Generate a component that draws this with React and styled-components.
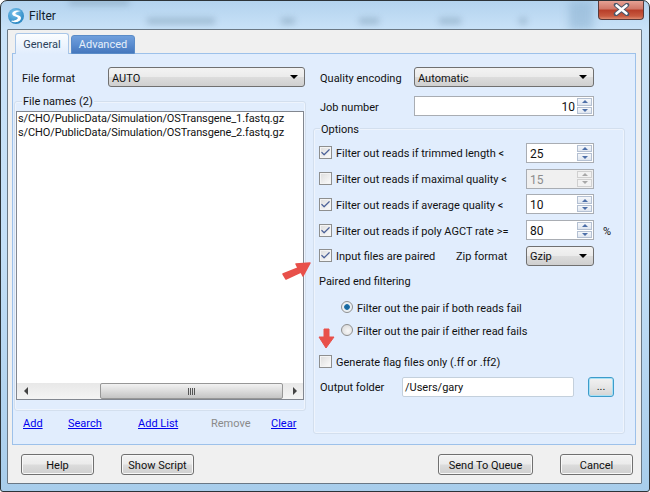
import React from 'react';
import styled, { createGlobalStyle } from 'styled-components';
import { Check } from 'lucide-react';

const GlobalStyle = createGlobalStyle`
  html, body {
    margin: 0;
    padding: 0;
    background: #fff;
  }
  * {
    box-sizing: border-box;
  }
`;

const leftLinks = [
  { label: 'Add' },
  { label: 'Search' },
  { label: 'Add List' },
  { label: 'Remove', disabled: true },
  { label: 'Clear' },
];

const filters = [
  { label: 'Filter out reads if trimmed length <', value: '25', checked: true },
  { label: 'Filter out reads if maximal quality <', value: '15', disabled: true },
  { label: 'Filter out reads if average quality <', value: '10', checked: true },
  { label: 'Filter out reads if poly AGCT rate >=', value: '80', checked: true, unit: '%' },
];

const CheckBox = ({ checked }) => (
  <Box>
    {checked && <Check size={11} strokeWidth={2.6} color="#4d6298" />}
  </Box>
);

const Spinner = ({ disabled }) => (
  <Spin $disabled={disabled}>
    <SpinButton $disabled={disabled}><SpinArrow /></SpinButton>
    <SpinButton $disabled={disabled}><SpinArrow $down /></SpinButton>
  </Spin>
);

const Select = ({ value, width }) => (
  <SelectBox $width={width}>
    <SelectValue>{value}</SelectValue>
    <Caret />
  </SelectBox>
);

const App = () => {
  return (
    <Window>
      <GlobalStyle />
      <Backdrop aria-hidden="true">
        <Smudge $left={68} $width={60} $top={-2} />
        <Smudge $left={146} $width={68} $top={17} />
        <Smudge $left={280} $width={14} $top={17} />
        <Smudge $left={358} $width={20} $top={17} />
        <Smudge $left={438} $width={22} $top={17} />
        <Smudge $left={518} $width={8} $top={17} />
        <Pillar />
      </Backdrop>
      <TitleBar>
        <AppLogo viewBox="0 0 16 16">
          <defs>
            <radialGradient id="logoFill" cx="0.4" cy="0.3" r="0.8">
              <stop offset="0" stopColor="#7cc4ee" />
              <stop offset="1" stopColor="#1f7fbd" />
            </radialGradient>
          </defs>
          <circle cx="8" cy="8" r="8" fill="url(#logoFill)" />
          <path d="M13 3C9 1.500 4 3 4.200 6c.2 2.600 5.400 2.200 5.600 4 .1 1.400-3 2.800-7 3 4 2.400 10 1 10.200-3 .1-3-5.400-2.800-5.600-4.200C7.200 4.400 10 3.400 13 3z" fill="#fff" />
        </AppLogo>
        <TitleText>Filter</TitleText>
        <CloseButton>
          <svg width="17" height="13" viewBox="0 0 17 13">
            <path d="M3 2l11 9M14 2L3 11" stroke="#49566a" strokeWidth="4.500" strokeLinecap="round" />
            <path d="M3.500 2.500l10 8M13.500 2.500l-10 8" stroke="#fff" strokeWidth="2.600" strokeLinecap="round" />
          </svg>
        </CloseButton>
      </TitleBar>
      <Client>
        <Tabs>
          <Tab $active>General</Tab>
          <Tab>Advanced</Tab>
        </Tabs>
        <Panel>
          <LeftColumn>
            <FormatRow>
              <FieldLabel $width={86}>File format</FieldLabel>
              <Select value="AUTO" width={197} />
            </FormatRow>
            <Group $height={310}>
              <Legend $left={7} $top={-7}>File names (2)</Legend>
              <FileList>
                <FileLines>
                  <div>s/CHO/PublicData/Simulation/OSTransgene_1.fastq.gz</div>
                  <div>s/CHO/PublicData/Simulation/OSTransgene_2.fastq.gz</div>
                </FileLines>
                <ScrollBar>
                  <ScrollEnd><Triangle /></ScrollEnd>
                  <Thumb>
                    <Grip /><Grip /><Grip /><Grip />
                  </Thumb>
                  <ScrollEnd $last><Triangle $right /></ScrollEnd>
                </ScrollBar>
              </FileList>
            </Group>
            <LinkRow>
              {leftLinks.map((link) => (
                <FileLink key={link.label} $disabled={link.disabled}>{link.label}</FileLink>
              ))}
            </LinkRow>
          </LeftColumn>
          <RightColumn>
            <FieldRow>
              <FieldLabel $width={94}>Quality encoding</FieldLabel>
              <Select value="Automatic" width={180} />
            </FieldRow>
            <FieldRow $top={9}>
              <FieldLabel $width={94}>Job number</FieldLabel>
              <NumberBox $width={180}>
                <NumberValue $right>10</NumberValue>
                <Spinner />
              </NumberBox>
            </FieldRow>
            <Group $height={306} $top={12} $pad>
              <Legend $left={6} $top={-6}>Options</Legend>
              {filters.map((row) => (
                <OptionRow key={row.label}>
                  <CheckBox checked={row.checked} />
                  <OptionText>{row.label}</OptionText>
                  <NumberBox $width={68} $disabled={row.disabled}>
                    <NumberValue $disabled={row.disabled}>{row.value}</NumberValue>
                    <Spinner disabled={row.disabled} />
                  </NumberBox>
                  {row.unit && <Unit>{row.unit}</Unit>}
                </OptionRow>
              ))}
              <OptionRow>
                <CheckBox checked />
                <PairedText>Input files are paired</PairedText>
                <ZipLabel>Zip format</ZipLabel>
                <Select value="Gzip" width={68} />
              </OptionRow>
              <SectionLabel>Paired end filtering</SectionLabel>
              <RadioList>
                <RadioRow>
                  <Radio $selected />
                  <RadioText>Filter out the pair if both reads fail</RadioText>
                </RadioRow>
                <RadioRow>
                  <Radio />
                  <RadioText>Filter out the pair if either read fails</RadioText>
                </RadioRow>
              </RadioList>
              <FlagRow>
                <CheckBox />
                <OptionText>Generate flag files only (.ff or .ff2)</OptionText>
              </FlagRow>
              <FolderRow>
                <FieldLabel $width={82}>Output folder</FieldLabel>
                <FolderInput>/Users/gary</FolderInput>
                <BrowseButton>...</BrowseButton>
              </FolderRow>
            </Group>
          </RightColumn>
        </Panel>
        <Footer>
          <FooterGroup>
            <PushButton $width={73}>Help</PushButton>
            <PushButton $width={73}>Show Script</PushButton>
          </FooterGroup>
          <FooterGroup>
            <PushButton $width={95}>Send To Queue</PushButton>
            <PushButton $width={73}>Cancel</PushButton>
          </FooterGroup>
        </Footer>
      </Client>
      <ArrowLayer viewBox="0 0 650 492">
        <path d="M283 274l15-6-2-4 14-1-7 13-2-4-15 7z" fill="#e8504a" stroke="#e8504a" strokeWidth="1.500" strokeLinejoin="round" />
        <path d="M324 329h5v8h5l-8 11-7-11h5z" fill="#e8504a" stroke="#e8504a" strokeWidth="1" strokeLinejoin="round" />
      </ArrowLayer>
    </Window>
  );
};

export default App;

const uiFont = `Roboto, "Open Sans", "Liberation Sans", sans-serif`;

const Window = styled.div`
  position: relative;
  width: 650px;
  height: 492px;
  overflow: hidden;
  display: flex;
  flex-direction: column;
  padding: 0 7px 7px 6px;
  background: linear-gradient(180deg, #b3d3ee 0%, #c9e2f8 6%, #c3dff7 50%, #a8cdeb 100%);
  border: 1px solid #2c3338;
  border-radius: 7px 7px 3px 3px;
  font-family: ${uiFont};
  font-size: 11px;
  color: #111;
`;

const Backdrop = styled.div`
  position: absolute;
  inset: 0 0 auto 0;
  height: 29px;
  overflow: hidden;
`;

const Smudge = styled.div`
  position: absolute;
  top: ${(props) => props.$top}px;
  left: ${(props) => props.$left}px;
  width: ${(props) => props.$width}px;
  height: 6px;
  background: #7f9db5;
  filter: blur(3px);
  opacity: 0.55;
`;

const Pillar = styled.div`
  position: absolute;
  top: 0;
  left: 568px;
  width: 24px;
  height: 29px;
  background: #8fb4d2;
  filter: blur(4px);
  opacity: 0.6;
`;

const TitleBar = styled.div`
  position: relative;
  flex: 0 0 28px;
  display: flex;
  align-items: center;
  padding: 2px 0 0 1px;
`;

const AppLogo = styled.svg`
  width: 16px;
  height: 16px;
  margin-right: 5px;
`;

const TitleText = styled.div`
  font-size: 12px;
  color: #10202c;
`;

const CloseButton = styled.div`
  position: absolute;
  top: -1px;
  right: -2px;
  width: 46px;
  height: 20px;
  display: flex;
  align-items: center;
  justify-content: center;
  border: 1px solid #5a3a3a;
  border-top: none;
  border-radius: 0 0 4px 4px;
  background: linear-gradient(180deg, #e8a79a 0%, #d1796a 45%, #b83f2a 55%, #c85a40 85%, #dd8b70 100%);
`;

const Client = styled.div`
  position: relative;
  flex: 1;
  display: flex;
  flex-direction: column;
  padding: 3px 5px 0 4px;
  background: #f0f0f0;
  border: 1px solid #6a7885;
  border-radius: 1px;
`;

const Tabs = styled.div`
  display: flex;
  align-items: flex-end;
  height: 21px;
  padding-left: 3px;
  gap: 2px;
  margin-bottom: -1px;
`;

const Tab = styled.div`
  position: relative;
  z-index: 1;
  display: flex;
  align-items: center;
  justify-content: center;
  width: ${(props) => (props.$active ? 54 : 64)}px;
  height: ${(props) => (props.$active ? 21 : 19)}px;
  border: 1px solid ${(props) => (props.$active ? '#a9c6e8' : '#5a8cc8')};
  border-bottom: ${(props) => (props.$active ? 'none' : undefined)};
  border-radius: 3px 3px 0 0;
  background: ${(props) =>
    props.$active
      ? 'linear-gradient(180deg, #fbfdff 0%, #e1edfd 100%)'
      : 'linear-gradient(180deg, #6f9fdc 0%, #5b8dd0 50%, #4577bd 100%)'};
  color: ${(props) => (props.$active ? '#2a3f5a' : '#e6effa')};
`;

const Panel = styled.div`
  flex: 0 0 392px;
  display: grid;
  grid-template-columns: 292px 312px;
  column-gap: 7px;
  padding: 13px 0 0 1px;
  background: #e1edfd;
  border: 1px solid #9dc1ea;
`;

const LeftColumn = styled.div`
  display: flex;
  flex-direction: column;
`;

const RightColumn = styled.div`
  display: flex;
  flex-direction: column;
`;

const FormatRow = styled.div`
  display: flex;
  align-items: center;
  height: 20px;
  padding-left: 8px;
`;

const FieldRow = styled.div`
  display: flex;
  align-items: center;
  height: 20px;
  padding-left: 7px;
  margin-top: ${(props) => props.$top || 0}px;
`;

const FieldLabel = styled.div`
  flex: 0 0 ${(props) => props.$width}px;
  padding-top: 2px;
  white-space: nowrap;
`;

const SelectBox = styled.div`
  flex: 0 0 ${(props) => props.$width}px;
  width: ${(props) => props.$width}px;
  height: 20px;
  display: flex;
  align-items: center;
  justify-content: space-between;
  padding: 0 6px 0 3px;
  border: 1px solid #707070;
  border-radius: 3px;
  background: linear-gradient(180deg, #f3f3f3 0%, #ebebeb 48%, #dcdcdc 52%, #cfcfcf 100%);
  color: #111;
`;

const SelectValue = styled.span`
  padding-top: 2px;
`;

const Caret = styled.div`
  width: 0;
  height: 0;
  border-left: 4px solid transparent;
  border-right: 4px solid transparent;
  border-top: 4px solid #000;
`;

const Group = styled.div`
  position: relative;
  height: ${(props) => props.$height}px;
  margin-top: ${(props) => props.$top || 14}px;
  padding: ${(props) => (props.$pad ? '11px 0 0 5px' : '9px 1px 11px 1px')};
  border: 1px solid #d3dfee;
  border-radius: 3px;
  box-shadow: inset 0 0 0 1px #eef4fd;
`;

const Legend = styled.div`
  position: absolute;
  top: ${(props) => props.$top}px;
  left: ${(props) => props.$left}px;
  padding: 0 1px;
  background: #e1edfd;
`;

const FileList = styled.div`
  height: 289px;
  display: flex;
  flex-direction: column;
  background: #fff;
  border: 1px solid #828790;
`;

const FileLines = styled.div`
  flex: 1;
  padding: 0 0 0 1px;
  line-height: 14px;
  letter-spacing: -0.1px;
  white-space: nowrap;
  overflow: hidden;
`;

const ScrollBar = styled.div`
  flex: 0 0 16px;
  display: flex;
  background: linear-gradient(180deg, #e8e8e8 0%, #f4f4f4 100%);
`;

const ScrollEnd = styled.div`
  flex: 0 0 17px;
  margin-left: ${(props) => (props.$last ? 'auto' : 0)};
  display: flex;
  align-items: center;
  justify-content: center;
`;

const Triangle = styled.div`
  width: 0;
  height: 0;
  border-top: 4px solid transparent;
  border-bottom: 4px solid transparent;
  border-left: ${(props) => (props.$right ? '4px solid #444' : 'none')};
  border-right: ${(props) => (props.$right ? 'none' : '4px solid #444')};
`;

const Thumb = styled.div`
  flex: 0 0 183px;
  margin-left: 66px;
  display: flex;
  align-items: center;
  justify-content: center;
  gap: 1px;
  border: 1px solid #979797;
  border-radius: 2px;
  background: linear-gradient(180deg, #f2f2f2 0%, #dcdcdc 50%, #c4c4c4 100%);
`;

const Grip = styled.div`
  width: 1px;
  height: 7px;
  background: #555;
`;

const LinkRow = styled.div`
  display: grid;
  grid-template-columns: 45px 70px 73px 60px auto;
  padding: 6px 0 0 9px;
`;

const FileLink = styled.span`
  justify-self: start;
  color: ${(props) => (props.$disabled ? '#8a8a8a' : '#0000ee')};
  text-decoration: ${(props) => (props.$disabled ? 'none' : 'underline')};
`;

const OptionRow = styled.div`
  display: flex;
  align-items: center;
  height: 25.75px;
`;

const Box = styled.div`
  flex: 0 0 13px;
  width: 13px;
  height: 13px;
  display: flex;
  align-items: center;
  justify-content: center;
  border: 1px solid #8e8f8f;
  background: linear-gradient(135deg, #dcdcdc 0%, #f6f6f6 80%);
  box-shadow: inset 0 0 0 1px #f4f4f4;
`;

const OptionText = styled.div`
  flex: 0 0 auto;
  width: 190px;
  margin-left: 4px;
  padding-top: 2px;
  white-space: nowrap;
`;

const PairedText = styled(OptionText)`
  width: 120px;
`;

const ZipLabel = styled.div`
  width: 70px;
  padding-top: 2px;
`;

const NumberBox = styled.div`
  flex: 0 0 ${(props) => props.$width}px;
  height: 20px;
  display: flex;
  align-items: stretch;
  justify-content: space-between;
  padding: 1px;
  border: 1px solid #a9adb3;
  background: ${(props) => (props.$disabled ? '#f0f0f0' : '#fff')};
`;

const NumberValue = styled.div`
  flex: 1;
  display: flex;
  align-items: center;
  justify-content: ${(props) => (props.$right ? 'flex-end' : 'flex-start')};
  padding: 2px 2px 0;
  font-size: 12px;
  color: ${(props) => (props.$disabled ? '#8c8c8c' : '#111')};
`;

const Spin = styled.div`
  flex: 0 0 15px;
  display: flex;
  flex-direction: column;
  gap: 1px;
`;

const SpinButton = styled.div`
  flex: 1;
  display: flex;
  align-items: center;
  justify-content: center;
  border: 1px solid ${(props) => (props.$disabled ? '#d0d0d0' : '#b4c0d2')};
  background: ${(props) => (props.$disabled ? '#f2f2f2' : 'linear-gradient(180deg, #f6f8fb 0%, #dfe6f0 100%)')};
  color: ${(props) => (props.$disabled ? '#a8a8a8' : '#4d6fa8')};
`;

const SpinArrow = styled.div`
  width: 0;
  height: 0;
  border-left: 3.500px solid transparent;
  border-right: 3.500px solid transparent;
  border-bottom: ${(props) => (props.$down ? 'none' : '3.500px solid currentColor')};
  border-top: ${(props) => (props.$down ? '3.500px solid currentColor' : 'none')};
`;

const Unit = styled.div`
  margin: 3px 0 0 9px;
`;

const SectionLabel = styled.div`
  height: 16px;
  line-height: 16px;
  margin-top: 5px;
`;

const RadioList = styled.div`
  display: flex;
  flex-direction: column;
  margin-top: 6px;
  padding-left: 22px;
`;

const RadioRow = styled.div`
  display: flex;
  align-items: center;
  height: 23px;
  gap: 4px;
`;

const RadioText = styled.span`
  padding-top: 2px;
`;

const Radio = styled.div`
  width: 12px;
  height: 12px;
  border-radius: 50%;
  border: 1px solid #8e8f8f;
  background: ${(props) =>
    props.$selected
      ? 'radial-gradient(circle, #16639a 0%, #1b6fa8 35%, #e8eef2 45%, #f4f4f4 100%)'
      : 'radial-gradient(circle at 60% 60%, #f8f8f8 0%, #d4d4d4 100%)'};
`;

const FlagRow = styled.div`
  display: flex;
  align-items: center;
  height: 20px;
  margin-top: 10px;
`;

const FolderRow = styled.div`
  display: flex;
  align-items: center;
  height: 20px;
  margin-top: 5px;
  padding-left: 1px;
`;

const FolderInput = styled.div`
  flex: 0 0 172px;
  height: 20px;
  display: flex;
  align-items: center;
  padding: 2px 2px 0;
  background: #fff;
  border: 1px solid #c4d0dc;
  border-radius: 2px;
`;

const BrowseButton = styled.div`
  flex: 0 0 26px;
  height: 20px;
  margin-left: 14px;
  display: flex;
  align-items: center;
  justify-content: center;
  border: 1px solid #3c9ccb;
  border-radius: 3px;
  background: linear-gradient(180deg, #f2f2f2 0%, #e6e6e6 50%, #d4d4d4 100%);
  box-shadow: inset 0 0 0 1px #a8e0f4;
`;

const Footer = styled.div`
  flex: 1;
  display: flex;
  align-items: flex-start;
  justify-content: space-between;
  padding: 9px 3px 0 9px;
`;

const FooterGroup = styled.div`
  display: flex;
  gap: 27px;
`;

const PushButton = styled.div`
  width: ${(props) => props.$width}px;
  height: 21px;
  padding-top: 2px;
  display: flex;
  align-items: center;
  justify-content: center;
  border: 1px solid #707070;
  border-radius: 3px;
  background: linear-gradient(180deg, #f3f3f3 0%, #ebebeb 48%, #dcdcdc 52%, #cfcfcf 100%);
  box-shadow: inset 0 0 0 1px #f8f8f8;
  color: #111;
`;

const ArrowLayer = styled.svg`
  position: absolute;
  top: -1px;
  left: -1px;
  width: 650px;
  height: 492px;
  pointer-events: none;
`;
